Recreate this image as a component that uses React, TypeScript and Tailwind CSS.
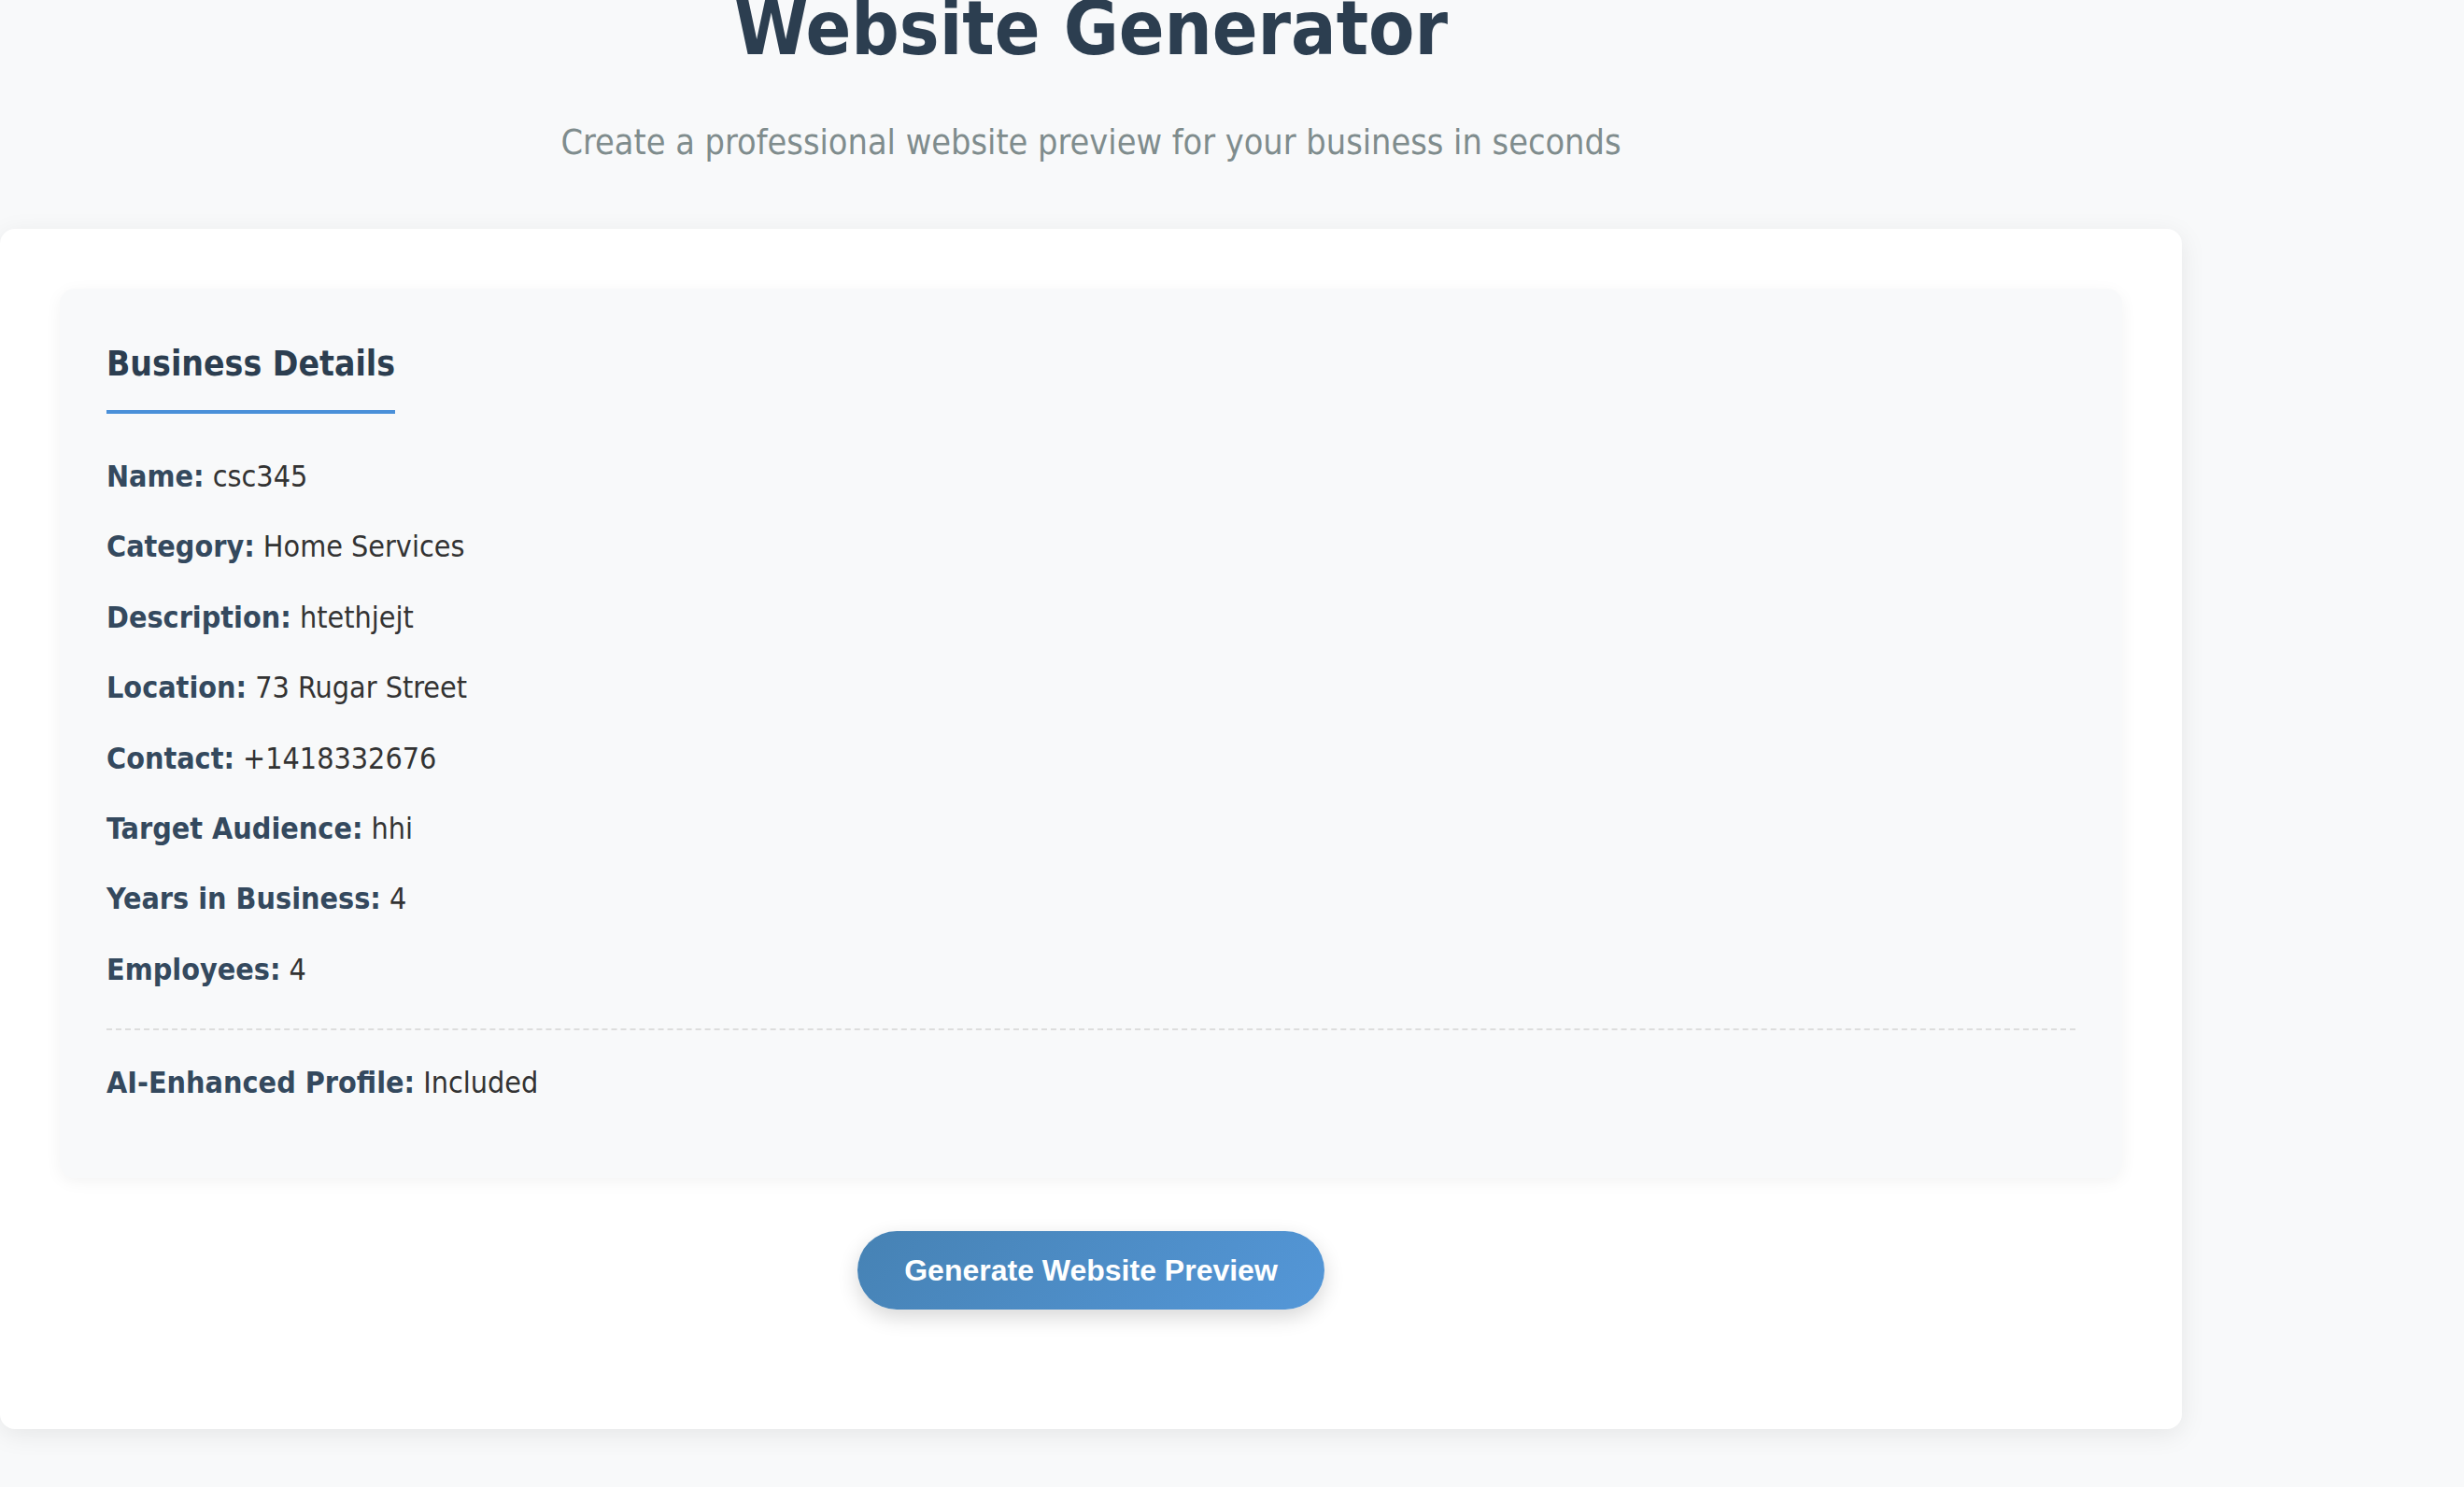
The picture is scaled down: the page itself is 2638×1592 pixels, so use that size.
const details: { label: string; value: string }[] = [
  { label: 'Name', value: 'csc345' },
  { label: 'Category', value: 'Home Services' },
  { label: 'Description', value: 'htethjejt' },
  { label: 'Location', value: '73 Rugar Street' },
  { label: 'Contact', value: '+1418332676' },
  { label: 'Target Audience', value: 'hhi' },
  { label: 'Years in Business', value: '4' },
  { label: 'Employees', value: '4' },
];

function DetailRow({ label, value }: { label: string; value: string }) {
  return (
    <p className="text-[32px] leading-[75.4px] text-[#333]">
      <strong className="font-bold text-[#34495e]">{label}:</strong> {value}
    </p>
  );
}

export default function App() {
  return (
    <div className="min-h-screen overflow-hidden bg-[#f8f9fa] font-['DejaVu_Sans_Condensed','DejaVu_Sans',sans-serif] font-stretch-condensed">
      <div className="w-[2336px]">
        <header className="text-center">
          <h1 className="mt-[-17px] text-[80px] leading-[96px] font-bold text-[#2c3e50]">Website Generator</h1>
          <p className="mt-[50px] text-[37.5px] leading-[46px] text-[#7f8c8d]">
            Create a professional website preview for your business in seconds
          </p>
        </header>

        <main className="mt-[70px] rounded-2xl bg-white px-16 pt-16 pb-[128px] shadow-[0_6px_28px_rgba(0,0,0,0.08)]">
          <section className="rounded-2xl bg-[#f8f9fa] px-[50px] pt-[59px] pb-[63px] shadow-[0_4px_18px_rgba(0,0,0,0.05)]">
            <h2 className="mb-[30px] inline-block border-b-4 border-[#4a90d9] pb-[27px] text-[37px] leading-[44px] font-bold text-[#2c3e50]">
              Business Details
            </h2>
            <div>
              {details.map((d) => (
                <DetailRow key={d.label} label={d.label} value={d.value} />
              ))}
            </div>
            <div className="mt-[25px] mb-[19px] border-t-2 border-dashed border-[#dddddd]" />
            <DetailRow label="AI-Enhanced Profile" value="Included" />
          </section>

          <div className="mt-[57px] flex justify-center">
            <button
              type="button"
              className="flex h-[84px] items-center rounded-full bg-[linear-gradient(135deg,#4682b4,#5497d8)] px-[50px] font-['Liberation_Sans',Arial,sans-serif] text-[32px] font-bold text-white shadow-[0_8px_22px_rgba(0,0,0,0.16)]"
            >
              Generate Website Preview
            </button>
          </div>
        </main>
      </div>
    </div>
  );
}
